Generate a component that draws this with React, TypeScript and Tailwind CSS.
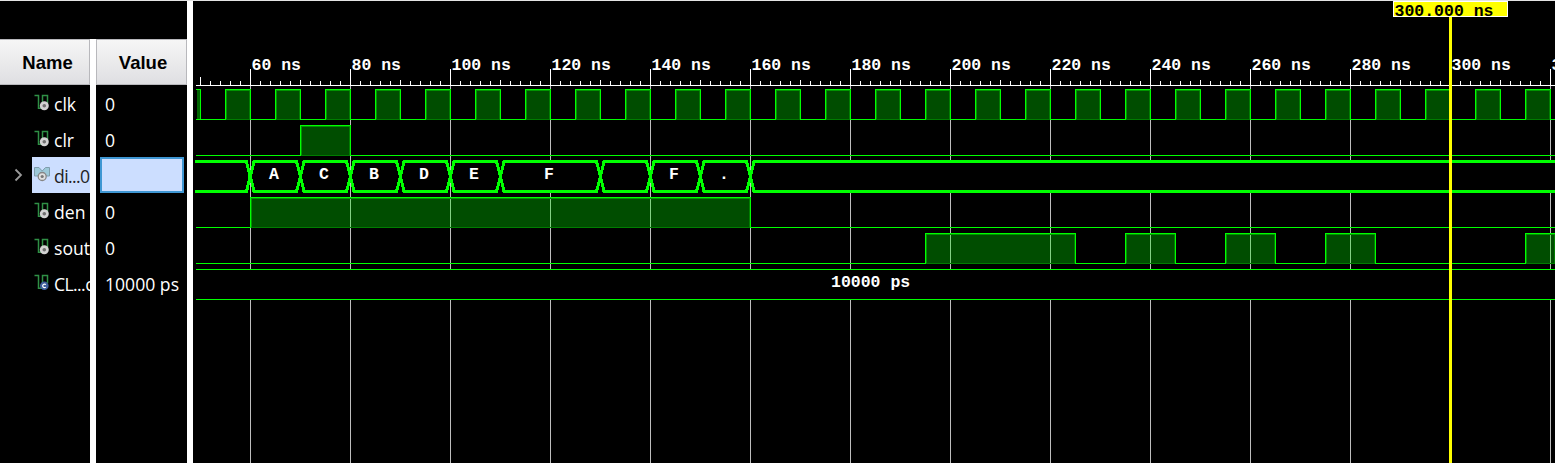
import React from "react";

const MONO = "font-['Liberation_Mono','Courier_New',monospace] font-bold";

type Pulse = [number, number];
type Kind = "scalar" | "bus" | "constant";

interface Signal {
  name: string;
  value: string;
  kind: Kind;
}

const signals: Signal[] = [
  { name: "clk", value: "0", kind: "scalar" },
  { name: "clr", value: "0", kind: "scalar" },
  { name: "di...0", value: "", kind: "bus" },
  { name: "den", value: "0", kind: "scalar" },
  { name: "sout", value: "0", kind: "scalar" },
  { name: "CL...c", value: "10000 ps", kind: "constant" },
];

// Chart x coordinates are relative to the wave pane; 5 px per ns.
const at = (ns: number) => 57 + (ns - 60) * 5;

const clkPulses: Pulse[] = Array.from({ length: 27 }, (_, i): Pulse => [55 + i * 10, 60 + i * 10]);
const majors = Array.from({ length: 14 }, (_, i) => 60 + i * 20);
const ticks = Array.from({ length: 137 }, (_, i) => 50 + i * 2).filter((n) => n % 20 !== 0 && n < 320);

const busCells: { from: number; to: number; label: string }[] = [
  { from: 60, to: 70, label: "A" },
  { from: 70, to: 80, label: "C" },
  { from: 80, to: 90, label: "B" },
  { from: 90, to: 100, label: "D" },
  { from: 100, to: 110, label: "E" },
  { from: 110, to: 130, label: "F" },
  { from: 130, to: 140, label: "" },
  { from: 140, to: 150, label: "F" },
  { from: 150, to: 160, label: "." },
];

function SignalIcon({ kind }: { kind: Kind }) {
  if (kind === "bus") {
    return (
      <svg width="17" height="18" viewBox="0 0 17 18" className="block shrink-0">
        <path d="M.5 2.5H5l3.2 3.5 3.3-3.5h4v8.5h-3L11 9H5.500L4 11H.5z" fill="#9cc8d8" stroke="#7f9dac" />
        <circle cx="8.200" cy="11.500" r="4" fill="#e0e0e0" stroke="#858585" strokeWidth="1.3" />
        <circle cx="8.200" cy="11.500" r="1.600" fill="#777" />
      </svg>
    );
  }
  return (
    <svg width="17" height="18" viewBox="0 0 17 18" className="block shrink-0">
      <path d="M.5 2.500h4v12.800h4V2.500h5v8" fill="none" stroke="#2f8f45" strokeWidth="1.500" />
      {kind === "constant" ? (
        <>
          <circle cx="10.300" cy="12.800" r="4.300" fill="#40609c" />
          <path d="M11.800 11.600a1.800 1.800 0 1 0 0 2.500" fill="none" stroke="#fff" strokeWidth="1.200" />
        </>
      ) : (
        <>
          <circle cx="10.300" cy="12.800" r="4.500" fill="#d2d2d2" />
          <circle cx="10.300" cy="12.800" r="1.800" fill="#707070" />
        </>
      )}
    </svg>
  );
}

function Header({ children }: { children: React.ReactNode }) {
  return (
    <div className="flex h-[46px] shrink-0 items-center justify-center border border-[#b8b8bc] bg-linear-to-b from-[#f6f6f6] to-[#dfdfe2] pt-[2px] font-['Liberation_Sans',Arial,sans-serif] text-[18.5px] font-bold text-black">
      {children}
    </div>
  );
}

function Wave({ pulses, top }: { pulses: Pulse[]; top: number }) {
  const bottom = top + 30;
  let baseline = `M3 ${bottom}.5`;
  pulses.forEach(([a, b]) => {
    baseline += `H${Math.max(at(a), 3) + 0.5}M${at(b)} ${bottom}.5`;
  });
  baseline += "H1362";
  return (
    <g>
      {pulses.map(([a, b]) => {
        const x = at(a);
        const w = at(b) - x;
        return (
          <g key={a}>
            <rect x={x} y={top} width={w} height={31} fill="#00ff00" fillOpacity="0.3" />
            <path d={`M${x + 1.5} ${bottom}V${top + 1.5}H${x + w}`} fill="none" stroke="#009600" />
            <path d={`M${x + w - 0.5} ${top + 2}V${bottom + 0.5}H${x + 1}`} fill="none" stroke="#007d00" />
            <path d={`M${x + 0.5} ${bottom + 1}V${top + 0.5}H${x + w + 0.5}V${bottom + 1}`} fill="none" stroke="#00ff00" />
          </g>
        );
      })}
      <path d={baseline} fill="none" stroke="#00ff00" />
    </g>
  );
}

function WaveChart() {
  const y = 176.5;
  return (
    <svg width="1362" height="462" viewBox="0 1 1362 462" className="block" shapeRendering="crispEdges">
      {majors.map((n) => (
        <path key={n} d={`M${at(n) + 0.5} 86V463`} stroke="#bebebe" />
      ))}
      <rect x="3" y="269" width="1359" height="31" fill="#000" />
      <path d="M3 85.5H1362" stroke="#fff" />
      {majors.map((n) => (
        <path key={n} d={`M${at(n) + 0.5} 69V86`} stroke="#fff" />
      ))}
      {ticks.map((n) => (
        <path key={n} d={`M${at(n) + 0.5} ${n === 50 ? 77 : n % 10 === 0 ? 80 : 81}V86`} stroke="#fff" />
      ))}

      <rect x="4" y="90" width="3" height="29" fill="#006400" />
      <path d="M3 89.5H7.5V119" fill="none" stroke="#00ff00" />
      <Wave pulses={clkPulses} top={89} />
      <Wave pulses={[[70, 80]]} top={125} />
      <Wave pulses={[[60, 160]]} top={197} />
      <Wave pulses={[[195, 225], [235, 245], [255, 265], [275, 285], [315, 321]]} top={233} />
      <path d="M3 269.5H1362M3 299.5H1362" stroke="#00ff00" />

      <path d={`M2 161.5H53.5L57 ${y}L53.5 191.5H2`} fill="#000" stroke="#00ff00" strokeWidth="3" />
      {busCells.map(({ from, to }) => {
        const a = at(from);
        const b = at(to);
        return (
          <path
            key={from}
            d={`M${a + 0.5} ${y}L${a + 4} 161.5H${b - 3.5}L${b + 0.5} ${y}L${b - 3.5} 191.5H${a + 4}Z`}
            fill="#000"
            stroke="#00ff00"
            strokeWidth="3"
          />
        );
      })}
      <path d={`M1362 161.5H561L557.5 ${y}L561 191.5H1362`} fill="#000" stroke="#00ff00" strokeWidth="3" />

      <path d="M1257.5 17V463" stroke="#ffff00" strokeWidth="3" />
      <rect x="1200.5" y="1.5" width="114" height="15" fill="#ffff00" stroke="#fff" />

      <g className={MONO} fontSize="16.5" fill="#fff">
        {majors.map((n) => (
          <text key={n} x={at(n) + 1.5} y="70">
            {n} ns
          </text>
        ))}
        {busCells.map(({ from, to, label }) => (
          <text key={from} x={(at(from) + at(to)) / 2 - 1} y="179" textAnchor="middle">
            {label}
          </text>
        ))}
        <text x="638" y="287">10000 ps</text>
        <text x="1201.5" y="15.5" fill="#000">300.000 ns</text>
      </g>
    </svg>
  );
}

export default function App() {
  return (
    <div className="flex h-[463px] w-[1555px] overflow-hidden border-t border-[#e4e4e4] bg-white font-['Open_Sans','Noto_Sans',sans-serif] text-[17.6px] text-white">
      <div className="flex w-[187px] shrink-0 flex-col">
        <div className="h-[38px] shrink-0 bg-black" />
        <div className="flex grow gap-[6px]">
          <div className="flex w-[90px] shrink-0 flex-col overflow-hidden bg-black">
            <div className="-ml-px flex flex-col">
              <Header><span className="ml-[6px]">Name</span></Header>
            </div>
            {signals.map((s) => (
              <div key={s.name} className="flex h-9 shrink-0 items-center">
                <div className="flex w-8 shrink-0 justify-center pl-[4px]">
                  {s.kind === "bus" && (
                    <svg width="9" height="14" viewBox="0 0 9 14">
                      <path d="M1.5 1.5L7 7l-5.5 5.5" fill="none" stroke="#999" strokeWidth="1.8" />
                    </svg>
                  )}
                </div>
                <div className={`flex h-9 w-[58px] shrink-0 items-center gap-[3px] pl-[2px] whitespace-nowrap ${s.kind === "bus" ? "bg-[#ccdeff] text-[#222]" : ""}`}>
                  <span className="pb-[2px]"><SignalIcon kind={s.kind} /></span>
                  <span className={`pt-[2px] ${s.name.includes("...") ? "tracking-[-0.6px]" : ""}`}>{s.name}</span>
                </div>
              </div>
            ))}
          </div>
          <div className="flex w-[91px] shrink-0 flex-col bg-black">
            <Header><span className="ml-[3px]">Value</span></Header>
            {signals.map((s) =>
              s.kind === "bus" ? (
                <div key={s.name} className="mr-[3px] ml-1 h-9 border-2 border-[#3f97d3] bg-[#ccdeff]" />
              ) : (
                <div key={s.name} className="flex h-9 items-center pt-[2px] pl-[9px] whitespace-nowrap">{s.value}</div>
              ),
            )}
          </div>
        </div>
      </div>
      <div className="ml-[6px] w-[1362px] shrink-0 bg-black">
        <WaveChart />
      </div>
    </div>
  );
}
